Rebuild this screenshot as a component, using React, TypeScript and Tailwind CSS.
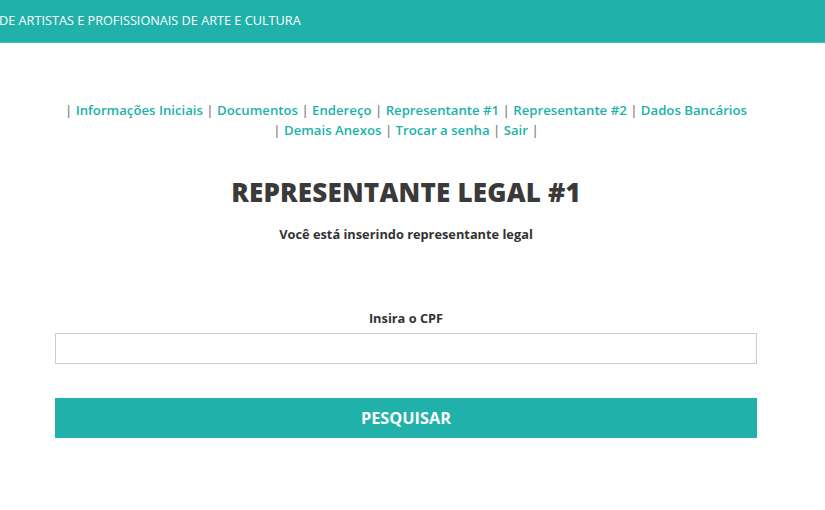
const links = [
  "Informações Iniciais",
  "Documentos",
  "Endereço",
  "Representante #1",
  "Representante #2",
  "Dados Bancários",
  "Demais Anexos",
  "Trocar a senha",
  "Sair",
];

export default function App() {
  return (
    <div className="min-h-screen bg-white font-['Open_Sans',sans-serif] text-[#333]">
      <div className="h-[43px] bg-[#20b2aa] flex items-center overflow-hidden border-b border-[#3cc0b8]">
        <span className="whitespace-nowrap text-[12.7px] text-white -ml-[1px]">
          DE ARTISTAS E PROFISSIONAIS DE ARTE E CULTURA
        </span>
      </div>

      <div className="w-[702px] ml-[55px] pt-[57px]">
        <p className="text-center text-[13.2px] font-semibold leading-[20px] px-[7px] text-[#888]">
          |{" "}
          {links.map((l) => (
            <span key={l}>
              <a className="text-[#20b2aa]">{l}</a> |{" "}
            </span>
          ))}
        </p>

        <h1 className="mt-[36px] text-center text-[26px] font-extrabold tracking-[0.2px] text-[#3a3a3a] leading-[32px]">
          REPRESENTANTE LEGAL #1
        </h1>
        <p className="mt-[17px] text-center text-[12.8px] font-bold text-[#333]">
          Você está inserindo representante legal
        </p>

        <div className="mt-[65px] text-center text-[12.8px] font-bold">Insira o CPF</div>
        <input className="mt-[5px] block w-full h-[31px] border border-[#ccc] bg-white outline-none" />

        <button className="mt-[34px] w-full h-[40px] bg-[#20b2aa] text-white font-bold text-[16.3px]">
          PESQUISAR
        </button>
      </div>
    </div>
  );
}
